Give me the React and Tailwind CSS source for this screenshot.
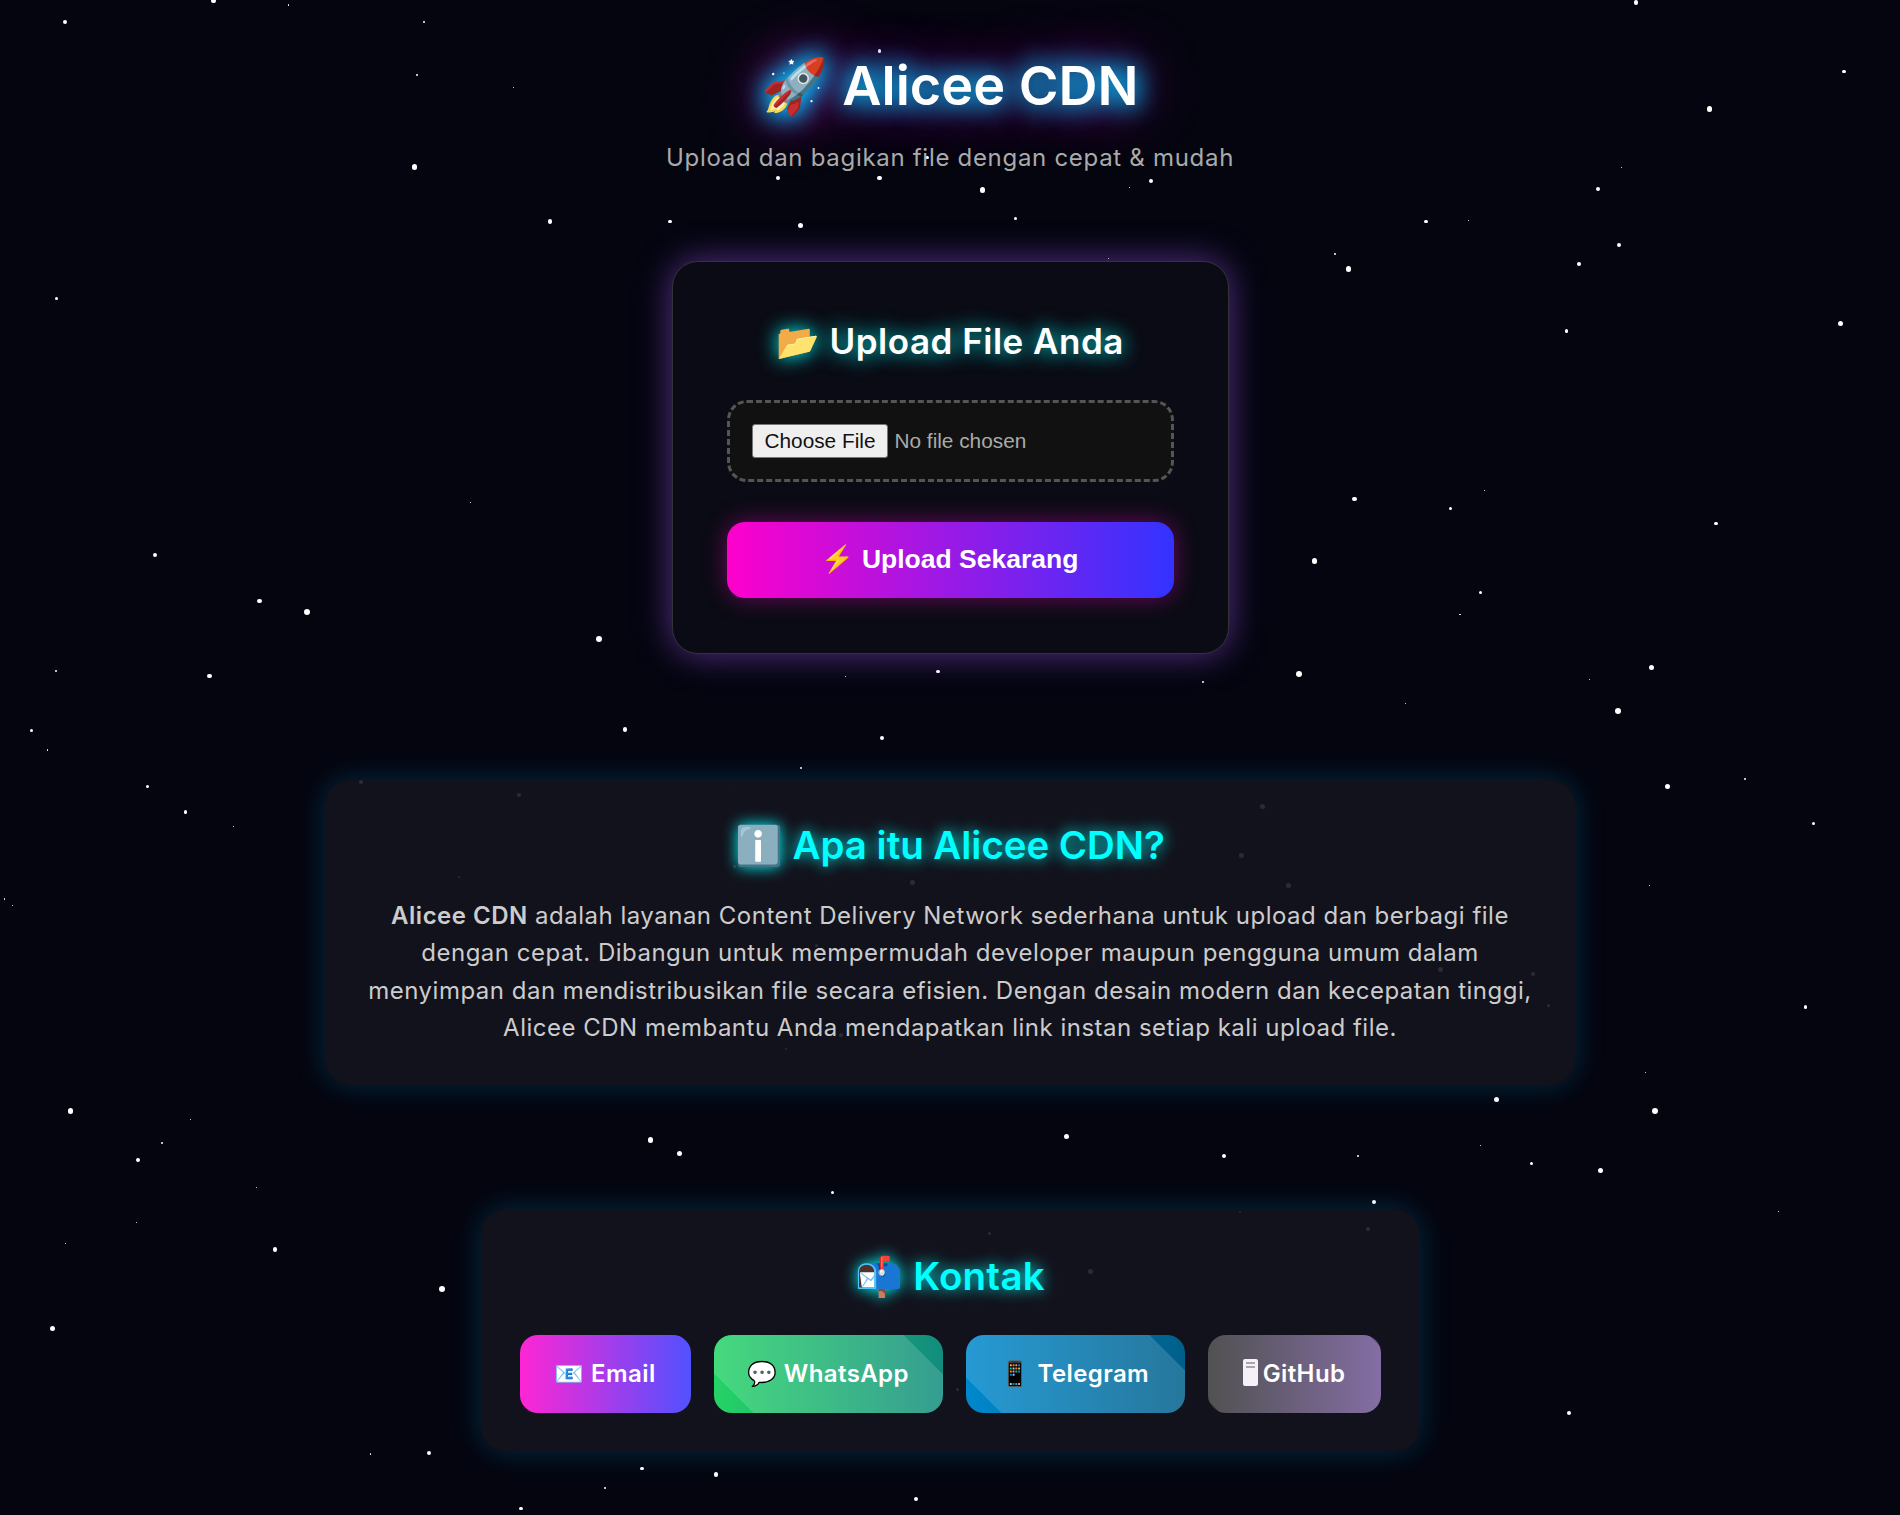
import React from 'react';

// x, y in the 1568-wide picture, r = dot size in px
const stars = [
  [54,18,4],[176,1,4.5],[238,4,1.5],[350,18,2],[344,62,2],[424,72,1.2],[342,138,5.5],[454,183,4.5],[553,183,3.5],[661,186,5],
  [642,147,4],[726,147,4.5],[765,130,3.5],[811,157,5.5],[838,180,3],[950,149,4],[932,155,1],[726,42,3.5],[1350,2,4.5],[1522,59,3.5],
  [1411,90,5.5],[1338,138,1],[1319,156,3.5],[1177,183,3.5],[1212,182,1.5],[1336,202,3.5],[1303,218,4.5],[1113,222,5.5],[1102,210,2],[1293,273,3.5],
  [1519,267,5],[47,246,3],[915,213,1],[388,415,1.2],[1118,412,4.5],[1197,420,3],[1225,405,1],[1416,432,3.5],[1085,463,5.5],[1222,489,3],
  [1205,507,1.5],[128,458,4.5],[214,496,4.5],[253,505,6],[494,527,6],[46,554,2],[173,558,4.5],[698,558,1.2],[774,554,3.5],[993,563,2],
  [1072,556,6],[1363,551,5],[1312,561,1],[1160,581,1],[1335,587,6],[26,603,2.5],[39,619,1.2],[516,602,4.5],[728,609,4],[661,634,2.5],
  [605,652,1],[122,649,3],[153,670,3.5],[193,682,1.2],[1376,649,4.5],[1440,643,2],[1497,680,3],[4,742,1.2],[10,747,1.2],[1361,731,1.2],
  [1490,831,3.5],[1358,885,1],[1235,907,5],[1366,917,5.5],[58,917,5.5],[134,943,2],[114,957,4],[157,924,1],[537,941,5.5],[561,952,5],
  [880,938,4.5],[1010,954,4.5],[1121,954,2],[1222,945,1],[1264,960,3],[1321,966,4.5],[1134,992,4],[1468,1000,1],[212,980,1.2],[113,1009,1],
  [54,1026,1],[687,984,2.5],[227,1031,4.5],[365,1064,6],[43,1096,5],[306,1200,1.2],[354,1199,4],[530,1212,3.5],[591,1217,4.5],[499,1228,2],
  [430,1245,3.5],[756,1237,4],[1295,1166,4.5],
  // under the translucent cards
  [298,645,4],[428,656,4],[1042,666,5],[1025,706,5],[1063,731,5],[753,728,5],[606,715,3],[674,780,3],[1189,800,5],[1265,804,4],
  [1278,830,3],[694,854,4],[649,866,2],[379,724,2],[817,1018,3],[900,1049,5],[1129,1014,4],[790,1147,3],[1023,1000,2],
];

const poppins = 'font-["Inter","Noto_Color_Emoji",sans-serif]';

const contacts = [
  { label: '📧 Email', cls: 'w-[171px] bg-[linear-gradient(45deg,transparent_8px,rgba(255,255,255,.15)_8px,rgba(255,255,255,.15)_calc(100%-8px),transparent_calc(100%-8px)),linear-gradient(90deg,#ff00cc,#3333ff)]' },
  { label: '💬 WhatsApp', cls: 'w-[229px] bg-[linear-gradient(45deg,transparent_28px,rgba(255,255,255,.15)_28px,rgba(255,255,255,.15)_calc(100%-28px),transparent_calc(100%-28px)),linear-gradient(90deg,#25d366,#128c7e)]' },
  { label: '📱 Telegram', cls: 'w-[219px] bg-[linear-gradient(45deg,transparent_25px,rgba(255,255,255,.15)_25px,rgba(255,255,255,.15)_calc(100%-25px),transparent_calc(100%-25px)),linear-gradient(90deg,#0088cc,#005f8a)]' },
];

const ServerGlyph = () => (
  <svg width="15" height="27" viewBox="0 0 15 27" className="-mt-[4px]">
    <rect width="15" height="27" rx="2" fill="#f4f2f7" />
    <rect x="3" y="3" width="9" height="2" fill="#a9a4ae" />
    <rect x="3" y="7" width="9" height="2" fill="#a9a4ae" />
  </svg>
);

const App = () => {
  return (
    <div className={`relative min-h-[1515px] overflow-hidden bg-[#04050f] ${poppins}`}>
      <div className="absolute inset-0">
        {stars.map(([x, y, r], i) => (
          <span
            key={i}
            className="absolute rounded-full bg-white"
            style={{ left: x * 1.2117 - r / 2, top: y * 1.2117 - r / 2, width: r, height: r }}
          />
        ))}
      </div>

      <div className="relative flex flex-col items-center pt-[50px]">
        <h1 className="text-[54px] leading-[71px] font-semibold text-white [text-shadow:0_0_25px_#00ccff,0_0_30px_#00aaff,0_0_60px_#ff00cc]">
          🚀 Alicee CDN
        </h1>
        <p className="mt-[20px] text-[24px] leading-[34px] tracking-[0.7px] text-[#aaaaaa]">Upload dan bagikan file dengan cepat &amp; mudah</p>

        <section className="mt-[86px] w-[557px] h-[393px] rounded-[26px] border border-[#333338] bg-[#0a0b14] px-[54px] pt-[59px] shadow-[0_0_35px_rgba(170,90,255,0.5)]">
          <h2 className="text-center text-[35px] leading-[40px] tracking-[0.5px] font-semibold text-white [text-shadow:0_0_20px_#00ffff]">📂 Upload File Anda</h2>
          <div className="mt-[39px] h-[82px] rounded-[20px] border-[3px] border-dashed border-[#555555] bg-[#111111] px-[22px] flex items-center">
            <input type="file" className="font-['Liberation_Sans',sans-serif] text-[20.8px] text-[#aaaaaa] file:mr-[6px] file:border file:border-[#767676] file:bg-[#efefef] file:text-[#111111] file:rounded-[3px] file:px-[12px] file:py-0" />
          </div>
          <button className="mt-[40px] w-full h-[76px] rounded-[18px] font-['Liberation_Sans','Noto_Color_Emoji',sans-serif] text-[26.5px] font-bold text-white bg-[linear-gradient(90deg,#ff00cc,#3333ff)] shadow-[0_0_25px_rgba(255,0,204,0.4)]">
            ⚡ Upload Sekarang
          </button>
        </section>

        <section className="mt-[126px] w-[1250px] h-[305px] rounded-[25px] bg-[#14141e]/90 px-[38px] pt-[40px] text-center shadow-[0_0_30px_rgba(0,180,255,0.22)]">
          <h2 className="text-[38.4px] leading-[50px] font-semibold text-[#00ffff] [text-shadow:0_0_15px_#00ffff]">ℹ️ Apa itu Alicee CDN?</h2>
          <p className="mt-[27px] text-[24px] leading-[37.4px] tracking-[0.5px] text-[#cccccc]">
            <strong className="font-semibold">Alicee CDN</strong> adalah layanan Content Delivery Network sederhana untuk upload dan berbagi file dengan cepat. Dibangun untuk mempermudah developer maupun pengguna umum dalam menyimpan dan mendistribusikan file secara efisien. Dengan desain modern dan kecepatan tinggi, Alicee CDN membantu Anda mendapatkan link instan setiap kali upload file.
          </p>
        </section>

        <section className="mt-[124px] w-[939px] h-[243px] rounded-[25px] bg-[#14141e]/90 px-[39px] pt-[42px] shadow-[0_0_30px_rgba(0,180,255,0.22)]">
          <h2 className="text-center text-[38.4px] leading-[50px] tracking-[0.3px] font-semibold text-[#00ffff] [text-shadow:0_0_15px_#00ffff]">📬 Kontak</h2>
          <div className="mt-[34px] flex justify-between">
            {contacts.map((c) => (
              <a key={c.label} className={`${c.cls} h-[78px] rounded-[18px] flex items-center justify-center text-[24px] tracking-[0.4px] font-semibold text-white`}>
                {c.label}
              </a>
            ))}
            <a className="w-[173px] h-[78px] rounded-[18px] flex items-center justify-center gap-[5px] text-[24px] tracking-[0.4px] font-semibold text-white bg-[linear-gradient(45deg,transparent_9px,rgba(255,255,255,.15)_9px,rgba(255,255,255,.15)_calc(100%-9px),transparent_calc(100%-9px)),linear-gradient(90deg,#333333,#6e5494)]">
              <ServerGlyph />
              GitHub
            </a>
          </div>
        </section>
      </div>
    </div>
  );
};

export default App;
